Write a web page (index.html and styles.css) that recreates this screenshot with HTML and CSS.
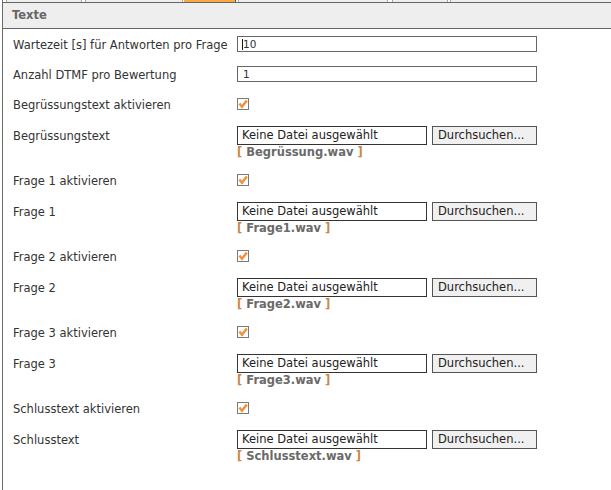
FILE: index.html
```html
<!DOCTYPE html>
<html lang="de">
<head>
<meta charset="utf-8">
<title>Texte</title>
<link rel="stylesheet" href="styles.css">
</head>
<body>
<div class="panel">
  <div class="tabs">
    <span class="tab tab-1"></span>
    <span class="tab tab-2"></span>
    <span class="tab tab-3 active"></span>
    <span class="tab tab-4"></span>
    <span class="tab tab-5"></span>
    <span class="tab tab-6"></span>
  </div>
  <div class="section-head">Texte</div>
  <div class="form">
    <div class="row row-text">
      <label class="lbl">Wartezeit [s] für Antworten pro Frage</label>
      <div class="txt"><span class="caret"></span>10</div>
    </div>
    <div class="row row-text">
      <label class="lbl">Anzahl DTMF pro Bewertung</label>
      <div class="txt">1</div>
    </div>

    <div class="row row-cb">
      <label class="lbl">Begrüssungstext aktivieren</label>
      <span class="cb"><svg viewBox="0 0 10 10" width="10" height="10"><path d="M1.4 4.4 L4 7.8 L8.8 1.6" /></svg></span>
    </div>
    <div class="row row-file">
      <label class="lbl">Begrüssungstext</label>
      <div class="ctrl">
        <div class="file"><span class="file-box">Keine Datei ausgewählt</span><span class="file-btn">Durchsuchen...</span></div>
        <div class="fname"><span class="br">[</span> Begrüssung.wav <span class="br">]</span></div>
      </div>
    </div>

    <div class="row row-cb">
      <label class="lbl">Frage 1 aktivieren</label>
      <span class="cb"><svg viewBox="0 0 10 10" width="10" height="10"><path d="M1.4 4.4 L4 7.8 L8.8 1.6" /></svg></span>
    </div>
    <div class="row row-file">
      <label class="lbl">Frage 1</label>
      <div class="ctrl">
        <div class="file"><span class="file-box">Keine Datei ausgewählt</span><span class="file-btn">Durchsuchen...</span></div>
        <div class="fname"><span class="br">[</span> Frage1.wav <span class="br">]</span></div>
      </div>
    </div>

    <div class="row row-cb">
      <label class="lbl">Frage 2 aktivieren</label>
      <span class="cb"><svg viewBox="0 0 10 10" width="10" height="10"><path d="M1.4 4.4 L4 7.8 L8.8 1.6" /></svg></span>
    </div>
    <div class="row row-file">
      <label class="lbl">Frage 2</label>
      <div class="ctrl">
        <div class="file"><span class="file-box">Keine Datei ausgewählt</span><span class="file-btn">Durchsuchen...</span></div>
        <div class="fname"><span class="br">[</span> Frage2.wav <span class="br">]</span></div>
      </div>
    </div>

    <div class="row row-cb">
      <label class="lbl">Frage 3 aktivieren</label>
      <span class="cb"><svg viewBox="0 0 10 10" width="10" height="10"><path d="M1.4 4.4 L4 7.8 L8.8 1.6" /></svg></span>
    </div>
    <div class="row row-file">
      <label class="lbl">Frage 3</label>
      <div class="ctrl">
        <div class="file"><span class="file-box">Keine Datei ausgewählt</span><span class="file-btn">Durchsuchen...</span></div>
        <div class="fname"><span class="br">[</span> Frage3.wav <span class="br">]</span></div>
      </div>
    </div>

    <div class="row row-cb">
      <label class="lbl">Schlusstext aktivieren</label>
      <span class="cb"><svg viewBox="0 0 10 10" width="10" height="10"><path d="M1.4 4.4 L4 7.8 L8.8 1.6" /></svg></span>
    </div>
    <div class="row row-file">
      <label class="lbl">Schlusstext</label>
      <div class="ctrl">
        <div class="file"><span class="file-box">Keine Datei ausgewählt</span><span class="file-btn">Durchsuchen...</span></div>
        <div class="fname"><span class="br">[</span> Schlusstext.wav <span class="br">]</span></div>
      </div>
    </div>
  </div>
</div>
</body>
</html>
```
FILE: styles.css
```css
html, body {
  margin: 0;
  padding: 0;
  background: #ffffff;
}
body {
  font-family: "DejaVu Sans", Verdana, sans-serif;
  font-size: 11.5px;
  color: #333333;
}
.panel {
  margin-left: 2px;
  border-left: 1px solid #6a6a6a;
  height: 490px;
  box-sizing: border-box;
}
.tabs {
  display: flex;
  height: 2px;
  padding-left: 3px;
}
.tab {
  height: 2px;
  box-sizing: border-box;
  background: #eeeeee;
  border-left: 1px solid #a8a8a8;
  border-right: 1px solid #a8a8a8;
}
.tab-1 { width: 76px; }
.tab-2 { width: 98px; margin-left: 3px; }
.tab-3 { width: 52px; margin-left: 1px; }
.tab-4 { width: 150px; margin-left: 2px; }
.tab-5 { width: 56px; margin-left: 4px; }
.tab-6 { flex: 1; margin-left: 2px; border-right: none; }
.tab.active {
  background: #f9a93f;
  border-left-color: #f9a93f;
  border-right-color: #555555;
}
.section-head {
  height: 25px;
  line-height: 25px;
  background: #eeeeee;
  border-top: 1px solid #666666;
  border-bottom: 1px solid #666666;
  padding-left: 9px;
  font-weight: bold;
  color: #666666;
}
.form {
  padding-top: 7px;
}
.row {
  display: flex;
  align-items: flex-start;
  padding-left: 10px;
  box-sizing: border-box;
}
.lbl {
  width: 224px;
  flex: none;
  color: #333333;
  white-space: nowrap;
}
.row-text {
  height: 30px;
}
.row-text .lbl {
  line-height: 16px;
  padding-top: 1px;
}
.txt {
  position: relative;
  width: 300px;
  height: 16px;
  box-sizing: border-box;
  border: 1px solid #666666;
  padding-left: 5px;
  font-size: 10.5px;
  line-height: 14px;
  color: #333333;
  background: #ffffff;
}
.caret {
  position: absolute;
  left: 4px;
  top: 2px;
  width: 1px;
  height: 11px;
  background: #111111;
}
.row-cb {
  height: 29px;
  padding-top: 2px;
}
.row-cb .lbl {
  line-height: 13px;
  padding-top: 1px;
}
.cb {
  width: 12px;
  height: 12px;
  box-sizing: border-box;
  border: 1px solid #7a7a7a;
  background: #ffffff;
  display: flex;
  align-items: center;
  justify-content: center;
}
.cb svg path {
  fill: none;
  stroke: #f0923c;
  stroke-width: 2.5;
  stroke-linecap: butt;
  stroke-linejoin: miter;
}
.row-file {
  height: 47px;
  padding-top: 1px;
}
.row-file .lbl {
  line-height: 19px;
  padding-top: 1px;
}
.ctrl {
  display: flex;
  flex-direction: column;
}
.file {
  display: flex;
  gap: 5px;
}
.file-box {
  width: 190px;
  height: 19px;
  box-sizing: border-box;
  border: 1px solid #333333;
  padding-left: 4px;
  line-height: 17px;
  color: #222222;
  background: #ffffff;
}
.file-btn {
  width: 105px;
  height: 19px;
  box-sizing: border-box;
  border: 1px solid #555555;
  padding-left: 5px;
  line-height: 17px;
  color: #222222;
  background: #f0f0f0;
}
.fname {
  line-height: 15px;
  font-weight: bold;
  color: #6a6a6a;
  white-space: nowrap;
}
.fname .br {
  color: #c8884c;
}
```
